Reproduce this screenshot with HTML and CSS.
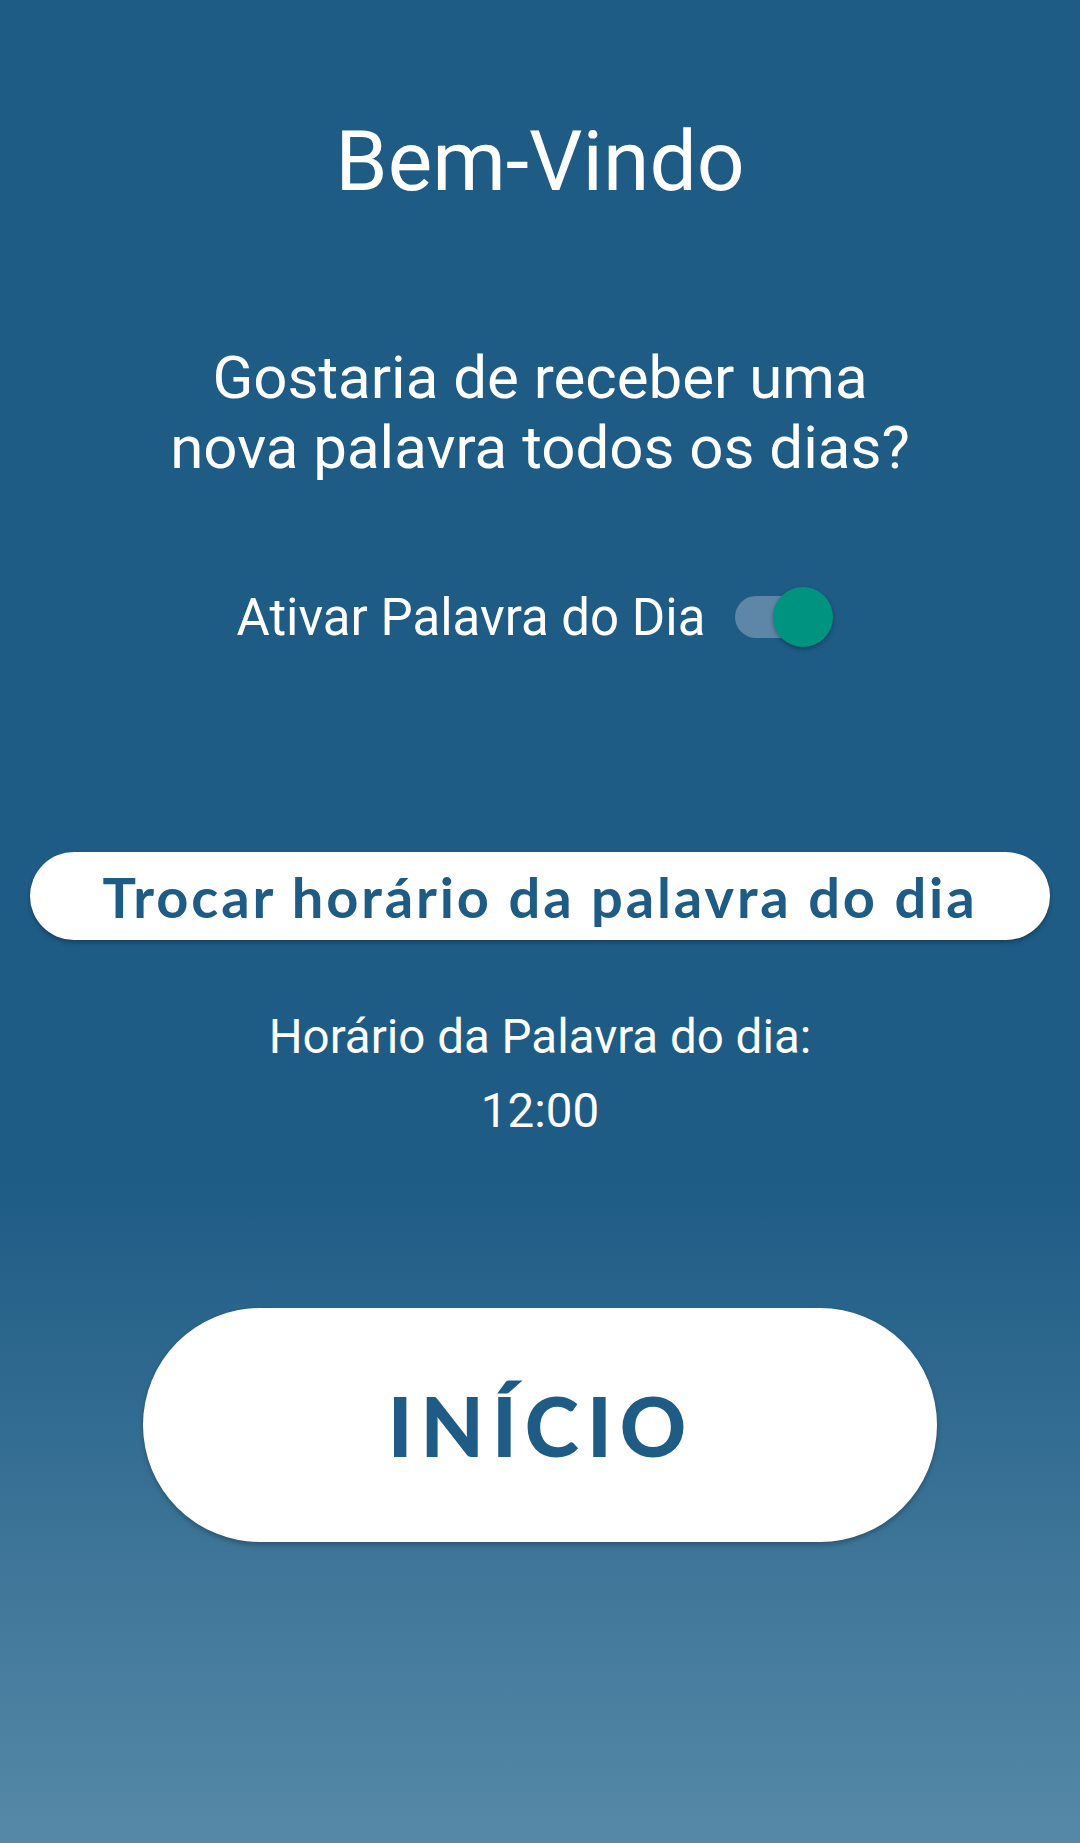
FILE: index.html
```html
<!DOCTYPE html>
<html lang="pt-BR">
<head>
  <meta charset="UTF-8" />
  <meta name="viewport" content="width=device-width, initial-scale=1.0"/>
  <title>Bem-Vindo</title>
  <link rel="stylesheet" href="styles.css">
</head>
<body>
  <main class="screen">
    <h1 class="title">Bem-Vindo</h1>

    <p class="question">Gostaria de receber uma<br>nova palavra todos os dias?</p>

    <label class="toggle-row">
      <span class="toggle-label">Ativar Palavra do Dia</span>
      <span class="switch">
        <span class="switch-track"></span>
        <span class="switch-thumb"></span>
      </span>
    </label>

    <button class="btn-time">Trocar horário da palavra do dia</button>

    <div class="schedule">
      <p class="schedule-label">Horário da Palavra do dia:</p>
      <p class="schedule-time">12:00</p>
    </div>

    <button class="btn-start">INÍCIO</button>
  </main>
</body>
</html>
```

FILE: styles.css
```css
body {
  margin: 0;
  background: linear-gradient(to bottom, #1e5b85 0%, #1e5b85 64%, #5689a7 100%);
  min-height: 1843px;
  color: #fff;
  font-family: Roboto, 'Noto Sans', sans-serif;
}

.screen {
  display: flex;
  flex-direction: column;
  align-items: center;
  padding-top: 112px;
}

.title {
  margin: 0;
  font-size: 84px;
  font-weight: 400;
  line-height: 100px;
}

.question {
  margin: 131px 0 0;
  font-size: 60px;
  line-height: 70px;
  text-align: center;
}

.toggle-row {
  display: flex;
  align-items: center;
  gap: 30px;
  height: 60px;
  margin: 104px 10px 0 0;
}

.toggle-label {
  font-size: 51px;
}

/* interruptor estilo Android */
.switch {
  position: relative;
  width: 98px;
  height: 60px;
  display: flex;
  align-items: center;
}

.switch-track {
  width: 92px;
  height: 42px;
  border-radius: 21px;
  background-color: #5e86a7;
}

.switch-thumb {
  position: absolute;
  top: 0;
  right: 0;
  width: 60px;
  height: 60px;
  border-radius: 50%;
  background-color: #00937f;
  box-shadow: 0 2px 4px rgba(0, 0, 0, 0.3);
}

.btn-time {
  width: 1020px;
  height: 88px;
  margin-top: 205px;
  border: none;
  border-radius: 44px;
  background: #fff;
  color: #1e5b85;
  font-family: Lato, 'Open Sans', sans-serif;
  font-weight: 700;
  font-size: 56px;
  letter-spacing: 2.9px;
  box-shadow: 0 3px 4px rgba(0, 0, 0, 0.25);
  cursor: pointer;
}

.schedule {
  margin-top: 60px;
  text-align: center;
}

.schedule p {
  margin: 0;
  font-size: 47.5px;
  line-height: 74px;
}

.btn-start {
  width: 794px;
  height: 234px;
  margin-top: 160px;
  border: none;
  border-radius: 117px;
  background: #fff;
  color: #1e5b85;
  font-family: Lato, 'Open Sans', sans-serif;
  font-weight: 900;
  font-size: 82px;
  letter-spacing: 8px;
  padding-left: 8px;
  box-shadow: 0 3px 5px rgba(0, 0, 0, 0.25);
  cursor: pointer;
}
```
